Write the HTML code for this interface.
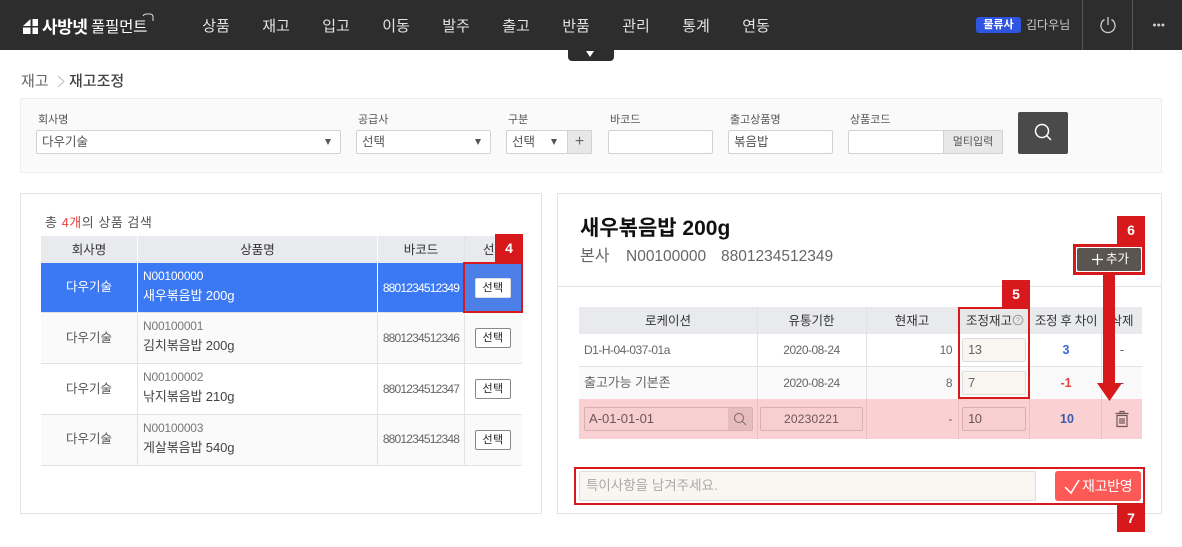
<!DOCTYPE html>
<html lang="ko"><head><meta charset="utf-8"><title>재고조정</title>
<style>
html,body{margin:0;padding:0;background:#fff}
body{width:1182px;height:547px;position:relative;overflow:hidden;font-family:"Liberation Sans","Noto Sans CJK KR",sans-serif;font-size:12.500px;color:#555}
div,span.a{position:absolute;box-sizing:border-box;white-space:nowrap}
.c{text-align:center}
.r{text-align:right}
.nav{top:15px;height:24px;line-height:24px;width:50px;text-align:center;color:#e4e4e4;font-size:15px}
.lb{top:113px;height:14px;line-height:14px;font-size:11px;color:#555}
.in{top:130px;height:24px;background:#fff;border:1px solid #d2d2d2;border-radius:2px;line-height:23px;padding-left:5px;font-size:12.500px;color:#555}
.tri{width:0;height:0;border-left:3.500px solid transparent;border-right:3.500px solid transparent;border-top:6px solid #555;top:139px}
.th{background:#e9eaee;color:#333;text-align:center;line-height:28px;font-size:12.500px}
.ln{background:#e2e2e2}
.pl{background:#e9c0c1}
.btn{width:36px;height:20px;left:475px;background:#fff;border:1px solid #888;border-radius:2px;color:#222;text-align:center;line-height:18px;font-size:11px;letter-spacing:.4px}
.red{background:#d7191c;color:#fff;font-weight:bold;text-align:center;font-size:14px}
.fr{border:3px solid #d7191c;background:transparent}
.q{left:962px;width:64px;height:24px;background:#f9f6f1;border:1px solid #ddd;border-radius:2px;line-height:22px;padding-left:5px;font-size:13px;color:#666;letter-spacing:-.5px}
.g{font-size:12px;color:#666;letter-spacing:-.5px}
.code{font-size:12px;letter-spacing:-.2px}
.nm{font-size:13px;letter-spacing:-.1px}
.bc{font-size:12px;letter-spacing:-.8px;color:#666}
</style></head><body>

<div style="left:0;top:0;width:1182px;height:50px;background:#2d2d2d"></div>
<svg style="position:absolute;left:20px;top:16px" width="22" height="20" viewBox="0 0 22 20"><path d="M3 10L10.500 3V10ZM12.500 3H18V10H12.500ZM3 11.500H10.500V18H3ZM12.500 11.500H18V18H12.500Z" fill="#fff"/></svg>
<div style="left:42px;top:16px;height:24px;line-height:24px;font-size:17px;font-weight:bold;color:#fff;letter-spacing:-.5px">사방넷</div>
<div style="left:91px;top:16px;height:24px;line-height:24px;font-size:15.500px;color:#fff;letter-spacing:-.2px">풀필먼트</div>
<svg style="position:absolute;left:140px;top:12px" width="16" height="14" viewBox="0 0 16 14"><path d="M3 4Q4 2 7 2H10Q13 2 13 5V9" fill="none" stroke="#ddd" stroke-width="1"/></svg>

<div class="nav" style="left:191px">상품</div>
<div class="nav" style="left:251px">재고</div>
<div class="nav" style="left:311px">입고</div>
<div class="nav" style="left:371px">이동</div>
<div class="nav" style="left:431px">발주</div>
<div class="nav" style="left:491px">출고</div>
<div class="nav" style="left:551px">반품</div>
<div class="nav" style="left:611px">관리</div>
<div class="nav" style="left:671px">통계</div>
<div class="nav" style="left:731px">연동</div>

<div style="left:568px;top:50px;width:46px;height:11px;background:#2d2d2d;border-radius:0 0 4px 4px"></div>
<div style="left:586px;top:51px;width:0;height:0;border-left:4.500px solid transparent;border-right:4.500px solid transparent;border-top:6px solid #fff"></div>

<div class="c" style="left:976px;top:17px;width:45px;height:16px;background:#2f55e0;border-radius:3px;color:#fff;font-size:11px;font-weight:bold;line-height:16px">물류사</div>
<div style="left:1026px;top:16px;height:18px;line-height:18px;font-size:12px;color:#ccc">김다우님</div>
<div style="left:1082px;top:0;width:1px;height:50px;background:#555"></div>
<div style="left:1132px;top:0;width:1px;height:50px;background:#555"></div>
<svg style="position:absolute;left:1099px;top:16px" width="18" height="18" viewBox="0 0 18 18"><path d="M5.500 3.500A7 7 0 1 0 12.500 3.500M9 1V9" fill="none" stroke="#ccc" stroke-width="1.300"/></svg>
<svg style="position:absolute;left:1151px;top:22px" width="15" height="6" viewBox="0 0 15 6"><g fill="#ccc"><circle cx="3.500" cy="3" r="1.500"/><circle cx="7.700" cy="3" r="1.500"/><circle cx="11.900" cy="3" r="1.500"/></g></svg>

<div style="left:21px;top:72px;height:20px;line-height:20px;font-size:15px;color:#666">재고</div>
<svg style="position:absolute;left:56px;top:75px" width="10" height="13" viewBox="0 0 10 13"><path d="M2 1L8 6.500L2 12" fill="none" stroke="#bbb" stroke-width="1"/></svg>
<div style="left:69px;top:72px;height:20px;line-height:20px;font-size:15px;font-weight:500;color:#444">재고조정</div>

<div style="left:20px;top:98px;width:1142px;height:75px;background:#fafafa;border:1px solid #eee"></div>
<div class="lb" style="left:38px">회사명</div>
<div class="in" style="left:36px;width:305px">다우기술</div><div class="tri" style="left:325px"></div>
<div class="lb" style="left:358px">공급사</div>
<div class="in" style="left:356px;width:135px">선택</div><div class="tri" style="left:475px"></div>
<div class="lb" style="left:508px">구분</div>
<div class="in" style="left:506px;width:62px">선택</div><div class="tri" style="left:551px"></div>
<div class="c" style="left:567px;top:130px;width:25px;height:24px;background:#e8e8e8;border:1px solid #d2d2d2;color:#666;font-size:16px;line-height:21px">+</div>
<div class="lb" style="left:610px">바코드</div>
<div class="in" style="left:608px;width:105px"></div>
<div class="lb" style="left:730px">출고상품명</div>
<div class="in" style="left:728px;width:105px">볶음밥</div>
<div class="lb" style="left:850px">상품코드</div>
<div class="in" style="left:848px;width:96px"></div>
<div class="c" style="left:943px;top:130px;width:60px;height:24px;background:#e8e8e8;border:1px solid #d2d2d2;line-height:22px;font-size:11px;color:#555">멀티입력</div>
<div style="left:1018px;top:112px;width:50px;height:42px;background:#4a4a4a;border-radius:2px"></div>
<svg style="position:absolute;left:1033px;top:122px" width="20" height="20" viewBox="0 0 20 20"><circle cx="9" cy="9" r="6.500" fill="none" stroke="#fff" stroke-width="1.500"/><path d="M13.500 13.500L18 18" stroke="#fff" stroke-width="1.500"/></svg>

<!-- left panel -->
<div style="left:20px;top:193px;width:522px;height:321px;border:1px solid #e4e4e4"></div>
<div style="left:45px;top:215px;height:16px;line-height:16px;font-size:13px;letter-spacing:.5px;color:#555">총 <span style="color:#e8413e">4개</span>의 상품 검색</div>
<div class="th" style="left:41px;top:236px;width:96px;height:27px">회사명</div>
<div class="th" style="left:138px;top:236px;width:239px;height:27px">상품명</div>
<div class="th" style="left:378px;top:236px;width:86px;height:27px">바코드</div>
<div class="th" style="left:465px;top:236px;width:57px;height:27px;text-align:left;padding-left:18px">선택</div>

<div style="left:41px;top:263px;width:481px;height:49px;background:#3b78f3"></div>
<div style="left:465px;top:263px;width:57px;height:49px;background:#4c7fe8"></div>
<div style="left:137px;top:263px;width:1px;height:49px;background:#fff"></div>
<div style="left:377px;top:263px;width:1px;height:49px;background:#fff"></div>
<div style="left:41px;top:313px;width:481px;height:50px;background:#fafafa"></div>
<div style="left:41px;top:415px;width:481px;height:50px;background:#fafafa"></div>
<div class="ln" style="left:41px;top:312px;width:481px;height:1px"></div>
<div class="ln" style="left:41px;top:363px;width:481px;height:1px"></div>
<div class="ln" style="left:41px;top:414px;width:481px;height:1px"></div>
<div class="ln" style="left:41px;top:465px;width:481px;height:1px"></div>
<div class="ln" style="left:137px;top:313px;width:1px;height:152px"></div>
<div class="ln" style="left:377px;top:313px;width:1px;height:152px"></div>
<div class="ln" style="left:464px;top:236px;width:1px;height:229px"></div>

<div class="c" style="left:41px;top:279px;width:96px;height:16px;line-height:16px;color:#fff">다우기술</div>
<div class="code" style="left:143px;top:268px;height:16px;line-height:16px;color:#fff">N00100000</div>
<div class="nm" style="left:143px;top:288px;height:16px;line-height:16px;color:#fff">새우볶음밥 200g</div>
<div class="c bc" style="left:378px;top:280px;width:86px;height:16px;line-height:16px;color:#fff">8801234512349</div>
<div class="btn" style="top:278px;border-color:#ddd">선택</div>

<div class="c" style="left:41px;top:330px;width:96px;height:16px;line-height:16px">다우기술</div>
<div class="code" style="left:143px;top:318px;height:16px;line-height:16px;color:#777">N00100001</div>
<div class="nm" style="left:143px;top:338px;height:16px;line-height:16px;color:#444">김치볶음밥 200g</div>
<div class="c bc" style="left:378px;top:330px;width:86px;height:16px;line-height:16px">8801234512346</div>
<div class="btn" style="top:328px">선택</div>

<div class="c" style="left:41px;top:381px;width:96px;height:16px;line-height:16px">다우기술</div>
<div class="code" style="left:143px;top:369px;height:16px;line-height:16px;color:#777">N00100002</div>
<div class="nm" style="left:143px;top:389px;height:16px;line-height:16px;color:#444">낚지볶음밥 210g</div>
<div class="c bc" style="left:378px;top:381px;width:86px;height:16px;line-height:16px">8801234512347</div>
<div class="btn" style="top:379px">선택</div>

<div class="c" style="left:41px;top:431px;width:96px;height:16px;line-height:16px">다우기술</div>
<div class="code" style="left:143px;top:420px;height:16px;line-height:16px;color:#777">N00100003</div>
<div class="nm" style="left:143px;top:440px;height:16px;line-height:16px;color:#444">게살볶음밥 540g</div>
<div class="c bc" style="left:378px;top:431px;width:86px;height:16px;line-height:16px">8801234512348</div>
<div class="btn" style="top:430px">선택</div>

<div class="fr" style="left:463px;top:262px;width:60px;height:51px;border-width:2px"></div>
<div class="red" style="left:495px;top:234px;width:28px;height:29px;line-height:29px">4</div>

<!-- right panel -->
<div style="left:557px;top:193px;width:605px;height:321px;border:1px solid #e4e4e4"></div>
<div style="left:580px;top:215px;height:28px;line-height:28px;font-size:21px;font-weight:bold;color:#111">새우볶음밥 200g</div>
<div style="left:580px;top:247px;height:20px;line-height:20px;font-size:16px;color:#666">본사</div>
<div style="left:626px;top:247px;height:20px;line-height:20px;font-size:15.500px;color:#666">N00100000</div>
<div style="left:721px;top:247px;height:20px;line-height:20px;font-size:15.500px;color:#666">8801234512349</div>
<div class="ln" style="left:558px;top:286px;width:603px;height:1px"></div>

<div style="left:1077px;top:248px;width:64px;height:23px;background:#5a5550;border-radius:2px;color:#fff;font-size:12.500px;line-height:23px;padding-left:29px">추가</div>
<svg style="position:absolute;left:1091px;top:253px" width="13" height="13" viewBox="0 0 13 13"><path d="M6.500 1V12M1 6.500H12" stroke="#fff" stroke-width="1.300"/></svg>
<div class="fr" style="left:1073px;top:244px;width:72px;height:31px"></div>
<div class="red" style="left:1117px;top:216px;width:28px;height:29px;line-height:29px">6</div>

<div class="th" style="left:579px;top:307px;width:178px;height:27px">로케이션</div>
<div class="th" style="left:757px;top:307px;width:109px;height:27px">유통기한</div>
<div class="th" style="left:866px;top:307px;width:92px;height:27px">현재고</div>
<div class="th" style="left:958px;top:307px;width:72px;height:27px;text-align:left;padding-left:8px;background:#e8e8e8">조정재고</div>
<div class="th" style="left:1030px;top:307px;width:72px;height:27px;letter-spacing:-.3px">조정 후 차이</div>
<div class="th" style="left:1102px;top:307px;width:40px;height:27px">삭제</div>
<svg style="position:absolute;left:1012px;top:314px" width="12" height="12" viewBox="0 0 12 12"><circle cx="6" cy="6" r="4.800" fill="none" stroke="#999"/><text x="6" y="8.500" text-anchor="middle" font-size="7" fill="#999" font-family="Liberation Sans">?</text></svg>

<div style="left:579px;top:366px;width:563px;height:33px;background:#fafafa"></div>
<div style="left:579px;top:399px;width:563px;height:40px;background:#fad0d2"></div>
<div class="ln" style="left:579px;top:366px;width:563px;height:1px"></div>
<div class="ln" style="left:757px;top:307px;width:1px;height:92px"></div>
<div class="ln" style="left:866px;top:307px;width:1px;height:92px"></div>
<div class="ln" style="left:1101px;top:307px;width:1px;height:92px"></div>
<div class="pl" style="left:757px;top:399px;width:1px;height:40px"></div>
<div class="pl" style="left:866px;top:399px;width:1px;height:40px"></div>
<div class="pl" style="left:958px;top:399px;width:1px;height:40px"></div>
<div class="pl" style="left:1029px;top:399px;width:1px;height:40px"></div>
<div class="pl" style="left:1101px;top:399px;width:1px;height:40px"></div>

<div class="g" style="left:584px;top:342px;height:16px;line-height:16px">D1-H-04-037-01a</div>
<div class="g c" style="left:757px;top:342px;width:109px;height:16px;line-height:16px">2020-08-24</div>
<div class="g r" style="left:866px;top:342px;width:86px;height:16px;line-height:16px">10</div>
<div class="q" style="top:338px">13</div>
<div class="c" style="left:1030px;top:342px;width:72px;height:16px;line-height:16px;color:#3567d6;font-weight:bold">3</div>
<div class="c" style="left:1102px;top:342px;width:40px;height:16px;line-height:16px">-</div>

<div style="left:584px;top:375px;height:16px;line-height:16px;font-size:13px;color:#666;letter-spacing:-.1px">출고가능 기본존</div>
<div class="g c" style="left:757px;top:375px;width:109px;height:16px;line-height:16px">2020-08-24</div>
<div class="g r" style="left:866px;top:375px;width:86px;height:16px;line-height:16px">8</div>
<div class="q" style="top:371px">7</div>
<div class="c" style="left:1030px;top:375px;width:72px;height:16px;line-height:16px;color:#e8413e;font-weight:bold">-1</div>
<div class="c" style="left:1102px;top:375px;width:40px;height:16px;line-height:16px">-</div>

<div style="left:584px;top:407px;width:169px;height:24px;background:#f8cfd0;border:1px solid #d9b0b0;border-radius:2px;line-height:22px;padding-left:4px;font-size:13px;color:#6d5555">A-01-01-01</div>
<div style="left:728px;top:408px;width:24px;height:22px;background:#e6bcbd"></div>
<svg style="position:absolute;left:733px;top:412px" width="14" height="14" viewBox="0 0 14 14"><circle cx="6" cy="6" r="4.500" fill="none" stroke="#7d6868"/><path d="M9.300 9.300L13 13" stroke="#7d6868"/></svg>
<div class="c" style="left:760px;top:407px;width:103px;height:24px;background:#f8cfd0;border:1px solid #d9b0b0;border-radius:2px;line-height:22px;font-size:12px;letter-spacing:.2px;color:#6d5555">20230221</div>
<div class="g r" style="left:866px;top:411px;width:86px;height:16px;line-height:16px">-</div>
<div class="q" style="top:407px;background:#f8cfd0;border-color:#d9b0b0;color:#6d5555">10</div>
<div class="c" style="left:1030px;top:411px;width:74px;height:16px;line-height:16px;color:#3a5aa8;font-weight:bold">10</div>
<svg style="position:absolute;left:1114px;top:410px" width="16" height="18" viewBox="0 0 16 18"><path d="M1.500 3.500H14.500M6 3.500V1.500H10V3.500M3 5.500H13V16.500H3ZM6 8V14M8 8V14M10 8V14" fill="none" stroke="#6d5555" stroke-width="1.200"/></svg>

<div class="fr" style="left:958px;top:307px;width:72px;height:92px;border-width:2px"></div>
<div class="red" style="left:1002px;top:280px;width:28px;height:27px;line-height:29px">5</div>

<svg style="position:absolute;left:1097px;top:275px" width="26" height="127" viewBox="0 0 26 127"><path d="M6 0H18V108H25L12.500 126L0 108H6Z" fill="#d7191c"/></svg>

<div style="left:579px;top:471px;width:457px;height:30px;background:#f9f6f1;border:1px solid #ddd;border-radius:2px;line-height:28px;padding-left:6px;font-size:13.500px;color:#aaa">특이사항을 남겨주세요.</div>
<div style="left:1055px;top:471px;width:86px;height:30px;background:#fd5a57;border-radius:3px;color:#fff;font-size:14px;line-height:30px;padding-left:27px;letter-spacing:-.3px">재고반영</div>
<svg style="position:absolute;left:1063px;top:477px" width="18" height="18" viewBox="0 0 18 18"><path d="M2 10L8 16L16 3" fill="none" stroke="#fff" stroke-width="1.500"/></svg>
<div class="fr" style="left:574px;top:467px;width:571px;height:38px;border-width:2px"></div>
<div class="red" style="left:1117px;top:505px;width:28px;height:27px;line-height:27px">7</div>

</body></html>
